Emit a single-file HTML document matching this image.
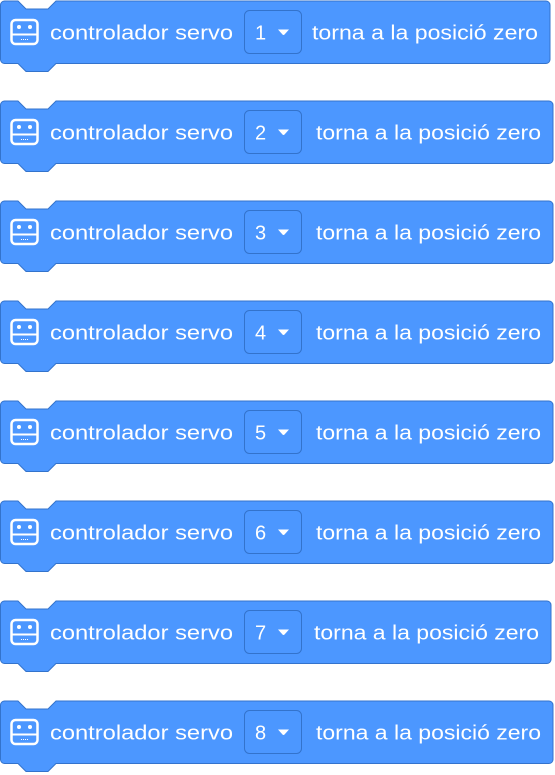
<!DOCTYPE html>
<html><head><style>
html,body{margin:0;padding:0;background:#fff;width:555px;height:775px;overflow:hidden}
svg text{font-family:"Liberation Sans",sans-serif;font-size:20px;fill:#fff}
</style></head><body>
<svg width="555" height="775" xmlns="http://www.w3.org/2000/svg">
<defs>
<g id="ic">
<rect x="11.5" y="19.5" width="26" height="24" rx="4" fill="none" stroke="#fff" stroke-width="2.5"/>
<line x1="11.5" y1="34" x2="37.5" y2="34" stroke="#fff" stroke-width="2"/>
<circle cx="19" cy="26.5" r="2" fill="#fff"/><circle cx="30" cy="26.5" r="2" fill="#fff"/>
<line x1="21" y1="39" x2="28" y2="39" stroke="#fff" stroke-width="1" stroke-dasharray="1,1"/>
</g>
</defs>
<g id="blocks"></g>
</svg>
<script>
var g=document.getElementById('blocks');var h='';
var W=[550,553,553,553,553,553,551,553],T=[312,316,316,316,316,316,314,316];
for(var i=0;i<8;i++){var y=i*100+0.5,w=W[i];
h+='<g transform="translate(0,'+y+')">'+
'<path d="M0.5,4.5 a4,4 0 0 1 4,-4 H18 l8,8 h22 l8,-8 H'+(w-4)+' a4,4 0 0 1 4,4 V59 a4,4 0 0 1 -4,4 H56 l-8,8 h-22 l-8,-8 H4.5 a4,4 0 0 1 -4,-4 Z" fill="#4c97ff" stroke="#3373cc" stroke-width="1"/>'+
'<use href="#ic"/>'+
'<text x="50" y="39" textLength="183" lengthAdjust="spacingAndGlyphs">controlador servo</text>'+
'<rect x="244.5" y="10" width="57" height="43" rx="5" fill="#4c97ff" stroke="#3373cc" stroke-width="1"/>'+
'<text x="255" y="39">'+(i+1)+'</text>'+
'<path d="M278,29 h11 l-4.5,5 a1.3,1.3 0 0 1 -2,0 Z" fill="#fff"/>'+
'<text x="'+T[i]+'" y="39" textLength="'+(w-T[i]-12)+'" lengthAdjust="spacingAndGlyphs">torna a la posició zero</text>'+
'</g>';}
g.innerHTML=h;
</script>
</body></html>
